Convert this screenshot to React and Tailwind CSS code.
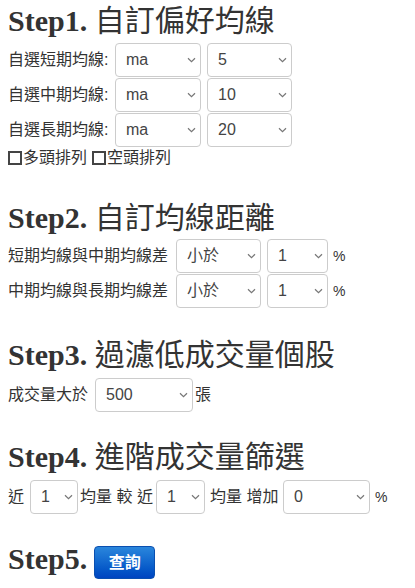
import React from "react";

const FONT = { fontFamily: '"Liberation Sans", "Noto Sans CJK TC", sans-serif' };

function Chevron() {
  return (
    <svg
      className="absolute right-[5px] top-1/2 -translate-y-1/2 pointer-events-none"
      width="9"
      height="6"
      viewBox="0 0 9 6"
      fill="none"
    >
      <path d="M1 1.2 L4.5 4.6 L8 1.2" stroke="#777" strokeWidth="1.2" />
    </svg>
  );
}

function Sel({ w, value, options }) {
  return (
    <div className={`relative h-[34px] shrink-0 ${w}`}>
      <select
        defaultValue={value}
        style={FONT}
        className="w-full h-full appearance-none border border-[#ccc] rounded-[4px] bg-white pl-[10px] pr-[14px] text-[16px] text-[#444] outline-none"
      >
        {options.map((o) => (
          <option key={o} value={o}>
            {o}
          </option>
        ))}
      </select>
      <Chevron />
    </div>
  );
}

function Heading({ step, text, className = "" }) {
  return (
    <div className={`h-[33px] leading-[33px] text-[30px] text-[#333] whitespace-nowrap ${className}`}>
      <span className="font-bold" style={{ fontFamily: '"Liberation Serif", serif' }}>
        {step}
      </span>
      {text ? (
        <span
          className="font-normal"
          style={{ fontFamily: '"Liberation Serif", "Noto Sans CJK TC", serif' }}
        >
          {" " + text}
        </span>
      ) : null}
    </div>
  );
}

function Box() {
  return <span className="inline-block w-[14px] h-[14px] border-2 border-[#444] bg-white shrink-0" />;
}

export default function App() {
  const maOpts = ["ma", "ema", "wma"];
  return (
    <div className="pl-[8px] text-[#333] text-[16px] bg-white min-h-[588px]" style={FONT}>
      {/* Step 1 */}
      <Heading step="Step1." text="自訂偏好均線" className="pt-[4px] h-[37px]" />
      <div className="mt-[6px] flex flex-col gap-[1px]">
        {[
          ["自選短期均線:", "5", ["5", "10", "20"]],
          ["自選中期均線:", "10", ["5", "10", "20"]],
          ["自選長期均線:", "20", ["10", "20", "60"]],
        ].map(([label, v, opts]) => (
          <div key={label} className="flex items-center h-[34px]">
            <span className="w-[107px] whitespace-nowrap">{label}</span>
            <Sel w="w-[86px]" value="ma" options={maOpts} />
            <div className="ml-[6px]">
              <Sel w="w-[85px]" value={v} options={opts} />
            </div>
          </div>
        ))}
      </div>
      <div className="mt-[1px] h-[20px] flex items-center whitespace-nowrap">
        <Box />
        <span className="ml-[1px]">多頭排列</span>
        <span className="ml-[5px] flex">
          <Box />
        </span>
        <span className="ml-[1px]">空頭排列</span>
      </div>

      {/* Step 2 */}
      <Heading step="Step2." text="自訂均線距離" className="mt-[33px]" />
      <div className="mt-[5px] flex flex-col gap-[1px]">
        {["短期均線與中期均線差", "中期均線與長期均線差"].map((label) => (
          <div key={label} className="flex items-center h-[34px]">
            <span className="w-[168px] whitespace-nowrap">{label}</span>
            <Sel w="w-[85px]" value="小於" options={["小於", "大於"]} />
            <div className="ml-[6px]">
              <Sel w="w-[61px]" value="1" options={["1", "2", "3", "5"]} />
            </div>
            <span className="ml-[5px] text-[14px]">%</span>
          </div>
        ))}
      </div>

      {/* Step 3 */}
      <Heading step="Step3." text="過濾低成交量個股" className="mt-[30px]" />
      <div className="mt-[7px] flex items-center h-[34px] whitespace-nowrap">
        <span className="w-[87px]">成交量大於</span>
        <Sel w="w-[98px]" value="500" options={["100", "500", "1000"]} />
        <span className="ml-[2px]">張</span>
      </div>

      {/* Step 4 */}
      <Heading step="Step4." text="進階成交量篩選" className="mt-[28px]" />
      <div className="mt-[7px] flex items-center h-[34px] whitespace-nowrap">
        <span className="w-[22px]">近</span>
        <Sel w="w-[48px]" value="1" options={["1", "3", "5"]} />
        <span className="ml-[2px] w-[76px]">均量 較 近</span>
        <Sel w="w-[49px]" value="1" options={["1", "3", "5"]} />
        <span className="ml-[5px] w-[73px]">均量 增加</span>
        <Sel w="w-[87px]" value="0" options={["0", "10", "20", "50"]} />
        <span className="ml-[5px] text-[14px]">%</span>
      </div>

      {/* Step 5 */}
      <div className="mt-[28px] flex items-start">
        <Heading step="Step5." />
        <button
          type="button"
          className="ml-[7px] mt-[4px] w-[61px] h-[33px] rounded-[4px] bg-linear-to-b from-[#2a86dc] to-[#0044c0] border border-[#0a4fb0] text-white font-bold text-[16px] leading-[31px] text-center"
          style={FONT}
        >
          查詢
        </button>
      </div>
    </div>
  );
}
